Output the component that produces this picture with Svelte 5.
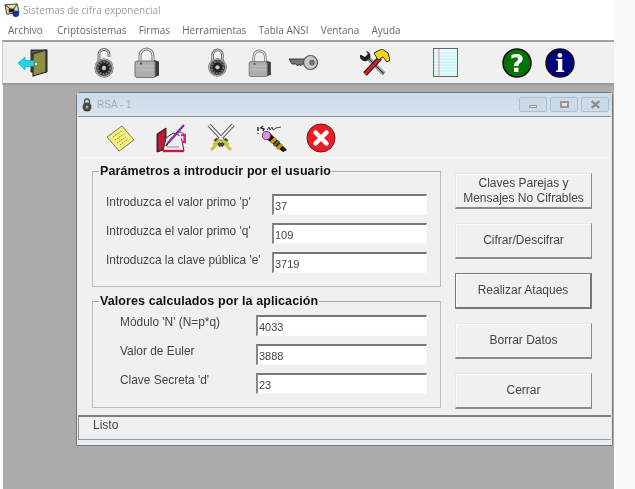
<script>
  const menus = ['Archivo', 'Criptosistemas', 'Firmas', 'Herramientas', 'Tabla ANSI', 'Ventana', 'Ayuda'];
  const inputs = [
    ["Introduzca el valor primo 'p'", '37'],
    ["Introduzca el valor primo 'q'", '109'],
    ["Introduzca la clave pública 'e'", '3719']
  ];
  const computed = [
    ["Módulo 'N' (N=p*q)", '4033'],
    ['Valor de Euler', '3888'],
    ["Clave Secreta 'd'", '23']
  ];
  const buttons = [
    ['Claves Parejas y', 'Mensajes No Cifrables'],
    ['Cifrar/Descifrar'],
    ['Realizar Ataques'],
    ['Borrar Datos'],
    ['Cerrar']
  ];
</script>

{#snippet combo(open)}
  <svg class={open ? 'i-combo-open' : 'i-combo'} viewBox="0 0 20 30">
    <path d={open ? 'M5 14V6a5 4.5 0 0 1 10 0v3' : 'M5 14V7a5 5 0 0 1 10 0v7'} fill="none" stroke="#666" stroke-width="2.800" />
    <path d={open ? 'M5 14V6a5 4.5 0 0 1 10 0v3' : 'M5 14V7a5 5 0 0 1 10 0v7'} fill="none" stroke="#ddd" stroke-width="1" />
    <circle cx="10" cy="20" r="9.500" fill="#4a4a4a" />
    <circle cx="10" cy="20" r="8.600" fill="none" stroke="#a8a8a8" stroke-width="1.400" />
    <circle cx="10" cy="20" r="6" fill="#222" stroke="#777" stroke-width="2" stroke-dasharray="1.500 1.500" />
    <circle cx="10" cy="20" r="2.200" fill="#c4c4c4" />
  </svg>
{/snippet}

{#snippet padlock(cls)}
  <svg class={cls} viewBox="0 0 26 31">
    <path d="M6 15V9a6.500 7 0 0 1 13 0v6" fill="none" stroke="#777" stroke-width="3" />
    <path d="M6 15V9a6.500 7 0 0 1 13 0v6" fill="none" stroke="#ececec" stroke-width="1.200" />
    <path d="M20 13l5 1.500v14l-5 2z" fill="#3a3a3a" />
    <rect x="1" y="14" width="20" height="16.500" rx="2" fill="#adadad" stroke="#777" />
    <path d="M2 19h18M2 23h18" stroke="#c2c2c2" />
    <circle cx="7" cy="16.500" r="1" fill="#444" />
  </svg>
{/snippet}

<div class="app">
  <div class="titlebar">
    <svg class="i-mail" viewBox="0 0 18 16">
      <path d="M1 2l13-1 2 9-13 2z" fill="#e8dfa8" stroke="#333" />
      <path d="M1 2l8 6 5-7" fill="none" stroke="#333" />
      <rect x="5" y="6" width="6" height="4" fill="#222" />
      <circle cx="12.500" cy="11.500" r="3.500" fill="#1b2fa8" />
    </svg>
    <span>Sistemas de cifra exponencial</span>
  </div>

  <nav class="menubar">
    {#each menus as m}<span>{m}</span>{/each}
  </nav>

  <div class="toolbar">
    <svg class="i-door" viewBox="0 0 30 28">
      <path d="M13 1h16v22H13z" fill="#555" stroke="#222" />
      <path d="M15 5l13-4v22l-13 4z" fill="#8f8f47" stroke="#2a2a2a" stroke-width="1.200" />
      <circle cx="18" cy="15" r="1" fill="#fff" />
      <path d="M0 14l7-6v3.500h9v6H7V21z" fill="#1fd5e6" stroke="#0b8a9a" stroke-width=".5" />
    </svg>
    {@render combo(true)}
    {@render padlock('i-pad1')}
    {@render combo(false)}
    {@render padlock('i-pad2')}
    <svg class="i-key" viewBox="0 0 30 17">
      <path d="M1 5h16v5h-3l-1.500 2-1.500-2-1.500 2-1.500-2H4z" fill="#777" stroke="#222" stroke-width=".8" />
      <circle cx="22.500" cy="8.500" r="7" fill="#c9c9c9" stroke="#555" stroke-width="1.200" />
      <circle cx="24" cy="8.500" r="2.500" fill="#777" stroke="#444" stroke-width=".6" />
    </svg>
    <svg class="i-tools" viewBox="0 0 30 28">
      <path d="M6 7l18 18" stroke="#999" stroke-width="4.500" />
      <path d="M6 7l18 18" stroke="#222" stroke-width="1" />
      <path d="M0 6a5 5 0 0 0 8 5l2-2a5 5 0 0 0-4-7l2 3-3 3-4-2z" fill="#222" />
      <path d="M20 9L5 25" stroke="#111" stroke-width="5" />
      <path d="M20 9L5 25" stroke="#d81f26" stroke-width="3" />
      <path d="M14 4l8-4 6 4 2 7-3 2-4-5-5 3z" fill="#f2d518" stroke="#333" />
    </svg>
    <svg class="i-note" viewBox="0 0 25 29">
      <rect x=".5" y=".5" width="24" height="28" fill="#e8fbfd" stroke="#666" />
      <path d="M1 5h23M1 8h23M1 11h23M1 14h23M1 17h23M1 20h23M1 23h23M1 26h23" stroke="#a8eff5" stroke-width=".8" />
      <path d="M6 1v27" stroke="#f08a8a" />
    </svg>
    <svg class="i-circle" viewBox="0 0 30 30">
      <circle cx="15" cy="15" r="14" fill="#047504" stroke="#111" stroke-width="1.500" />
      <text x="15" y="24" text-anchor="middle" class="q">?</text>
    </svg>
    <svg class="i-circle2" viewBox="0 0 30 30">
      <circle cx="15" cy="15" r="14" fill="#00007f" stroke="#111" stroke-width="1.500" />
      <text x="15" y="24" text-anchor="middle" class="inf">i</text>
    </svg>
  </div>

  <main class="mdi">
    <section class="window">
      <header class="wtitle">
        <svg class="i-wicon" viewBox="0 0 10 14">
          <path d="M2.500 6V3.500a2.500 2.500 0 0 1 5 0V6" fill="none" stroke="#555" stroke-width="1.300" />
          <circle cx="5" cy="9" r="4.500" fill="#444" />
          <circle cx="5" cy="9" r="1.500" fill="#aaa" />
        </svg>
        <span class="wname">RSA - 1</span>
        <div class="wbtns">
          <span class="wb"><i class="min"></i></span>
          <span class="wb"><i class="max"></i></span>
          <span class="wb">
            <svg viewBox="0 0 10 8"><path d="M1.500 1l7 6M8.500 1l-7 6" stroke="#8a8a8a" stroke-width="2" /></svg>
          </span>
        </div>
      </header>

      <div class="wtools">
        <svg class="i-paper" viewBox="0 0 29 27">
          <path d="M1 12L16 1l12 14-15 11z" fill="#f6ee7e" stroke="#777" />
          <path d="M7 12l9-6M9 15l9-6M11 18l9-6M14 20l8-6" stroke="#8a8a4a" stroke-dasharray="1.500 1" />
        </svg>
        <svg class="i-book" viewBox="0 0 30 29">
          <path d="M1 10l9-6v21l-9 3z" fill="#a5162a" stroke="#222" />
          <path d="M4 10v15M7 8v15" stroke="#e35" stroke-width=".8" />
          <path d="M7 27l3-13 7-5 8 3 3 15z" fill="#efefef" stroke="#333" />
          <path d="M22 9l3-1 3 2v8" fill="#fff" stroke="#333" stroke-width=".8" />
          <path d="M25 11h4v7h-3" fill="none" stroke="#d7258a" stroke-width="2.400" />
          <path d="M7 27h21" stroke="#c8184a" stroke-width="2.400" />
          <path d="M12 19L28 1" stroke="#8a2aa8" stroke-width="2.400" />
          <path d="M12 19l-2 3" stroke="#222" stroke-width="1.500" />
          <path d="M11 23h12" stroke="#888" />
        </svg>
        <svg class="i-swords" viewBox="0 0 28 28">
          <path d="M2 1l15 16M26 1L11 17" stroke="#555" stroke-width="4" />
          <path d="M2 1l15 16M26 1L11 17" stroke="#e8e8e8" stroke-width="2" />
          <path d="M8 15l6 7M20 15l-6 7" stroke="#444" stroke-width="3.500" />
          <path d="M6 21l7-5M22 21l-7-5M4 26l6-6M24 26l-6-6" stroke="#c8c832" stroke-width="3" />
        </svg>
        <svg class="i-pencil" viewBox="0 0 31 28">
          <path d="M2 3v4M2 9v1M7 2l-2 2 3 1-1 2" stroke="#222" stroke-width="1.400" fill="none" />
          <path d="M11 6l2-3 1 3 2-3 1 3 3-2 5-1" stroke="#444" fill="none" />
          <path d="M8 13l5-5 18 18-4 2z" fill="#111" />
          <circle cx="10.500" cy="11.500" r="4.200" fill="#e889e0" stroke="#333" stroke-width=".8" />
          <path d="M15 19l5-5" stroke="#d88a1e" stroke-width="3.500" />
          <path d="M18 22l5-5" stroke="#2f7a2a" stroke-width="3" />
          <path d="M21 25l5-5" stroke="#d88a1e" stroke-width="3.500" />
          <path d="M25 27l3-3 2 3z" fill="#222" />
        </svg>
        <svg class="i-x" viewBox="0 0 30 30">
          <circle cx="15" cy="15" r="14" fill="#ec1c24" stroke="#7a1010" />
          <path d="M9.500 9.500l11 11M20.500 9.500l-11 11" stroke="#fff" stroke-width="4.500" stroke-linecap="round" />
        </svg>
      </div>

      <div class="wbody">
        <div class="groups">
          <fieldset class="g1">
            <legend>Parámetros a introducir por el usuario</legend>
            {#each inputs as [l, v]}
              <label class="row"><span>{l}</span><input value={v} /></label>
            {/each}
          </fieldset>
          <fieldset class="g2">
            <legend>Valores calculados por la aplicación</legend>
            {#each computed as [l, v]}
              <label class="row"><span>{l}</span><input value={v} /></label>
            {/each}
          </fieldset>
        </div>
        <div class="actions">
          {#each buttons as lines, i}
            <button class:focus={i === 2}>{#each lines as t}<span>{t}</span>{/each}</button>
          {/each}
        </div>
      </div>

      <footer class="status">Listo</footer>
    </section>
  </main>
</div>

<style>
  :global(body) { margin: 0; background: #fafafa; overflow: hidden; }
  .app {
    width: 614px; height: 489px; background: #fff; display: flex; flex-direction: column;
    font-family: "Liberation Sans", Arial, sans-serif; overflow: hidden; filter: blur(.45px);
  }
  .titlebar { height: 20px; display: flex; align-items: center; gap: 2px; padding-left: 4px; color: #9a9a9a; font: 10px "Open Sans", sans-serif; }
  .i-mail { width: 17px; height: 15px; }
  .menubar { height: 20px; display: flex; align-items: center; gap: 12.200px; padding-left: 8px; color: #666; font: 10px "Open Sans", sans-serif; }
  .menubar span:first-child { margin-right: 2px; }
  .toolbar {
    height: 41px; margin-left: 2px; background: #f0f0f0; border-top: 2px solid #a0a0a0; border-left: 1px solid #c8c8c8;
    border-bottom: 2px solid #9a9a9a; display: flex; align-items: center; padding-left: 15px; box-sizing: content-box;
  }
  .toolbar svg, .wtools svg { flex: none; }
  .i-door { width: 30px; height: 28px; }
  :global(.i-combo-open) { width: 20px; height: 30px; margin-left: 46px; }
  :global(.i-pad1) { width: 26px; height: 31px; margin-left: 20px; }
  :global(.i-combo) { width: 21px; height: 29px; margin-left: 47px; }
  :global(.i-pad2) { width: 24px; height: 28px; margin-left: 20px; }
  .i-key { width: 30px; height: 17px; margin-left: 16px; }
  .i-tools { width: 30px; height: 28px; margin-left: 42px; }
  .i-note { width: 25px; height: 29px; margin-left: 43px; }
  .i-circle { width: 30px; height: 30px; margin-left: 44px; }
  .i-circle2 { width: 30px; height: 30px; margin-left: 13px; }
  .q, .inf { fill: #fff; font: bold 25px "DejaVu Sans", sans-serif; }
  .inf { font-family: "DejaVu Serif", serif; }

  .mdi { flex: 1; margin-left: 3px; background: #ababab; padding: 7px 1px 0 73px; min-height: 0; }
  .window {
    height: 354px; box-sizing: border-box; background: #e6edf4; border: 1px solid #777; border-radius: 4px 4px 0 0;
    display: flex; flex-direction: column;
  }
  .wtitle {
    height: 23px; flex: none; display: flex; align-items: center; padding: 0 3px 0 5px;
    background: linear-gradient(#c9d9e8, #d9e5f0); color: #a8adb3; font-size: 10px;
  }
  .i-wicon { width: 10px; height: 14px; margin-right: 5px; }
  .wname { flex: 1; }
  .wbtns { display: flex; gap: 3px; }
  .wb {
    width: 28px; height: 15px; box-sizing: border-box; border: 1px solid #aebfd0; border-radius: 2px;
    background: #cddbe9; display: flex; align-items: center; justify-content: center;
  }
  .wb svg { width: 11px; height: 9px; }
  .min { width: 8px; height: 3px; background: #e8e8e8; border: 1px solid #999; margin-top: 3px; box-sizing: border-box; }
  .max { width: 9px; height: 7px; box-sizing: border-box; background: #e8e8e8; border: 2px solid #999; }
  .wtools {
    height: 38px; padding-top: 2px; flex: none; margin: 0 1px; display: flex; align-items: center; padding-left: 28px;
    border-top: 1px solid #8f8f8f; background: #f0f0f0; border-bottom: 1px solid #f8f8f8;
  }
  .i-paper { width: 29px; height: 27px; }
  .i-book { width: 30px; height: 29px; margin-left: 21px; }
  .i-swords { width: 28px; height: 28px; margin-left: 21px; }
  .i-pencil { width: 31px; height: 28px; margin-left: 21px; }
  .i-x { width: 30px; height: 30px; margin-left: 19px; }

  .wbody { height: 257px; flex: none; display: flex; margin: 0 1px; padding-left: 14px; box-sizing: border-box; background: #f0f0f0; }
  .groups { width: 349px; padding-top: 6px; display: flex; flex-direction: column; gap: 7px; }
  fieldset {
    margin: 0; box-sizing: border-box; min-width: 0; border: 1px solid #bdbdbd; border-top-color: #a9a9a9;
    padding: 0; 
  }
  .g1 { height: 123px; padding: 16px 13px 0 13px; }
  .g2 { height: 114px; padding: 7px 13px 0 27px; }
  legend { padding: 0 1px; font: bold 12.500px "Liberation Sans", sans-serif; letter-spacing: .1px; color: #111; line-height: 14px; }
  .g1 legend { margin-left: -7px; }
  .g2 legend { margin-left: -21px; }
  .row { display: flex; height: 21px; margin-bottom: 8px; justify-content: space-between; color: #444; font-size: 11.900px; }
  .row span { line-height: 14px; }
  .g1 .row span { margin-top: 1px; }
  input {
    width: 155px; height: 21px; box-sizing: border-box; border: 1px solid #f8f8f8; border-top: 2px solid #777; border-left: 2px solid #888;
    background: #fff; padding: 2px 0 0 1px; margin: 0; font: 11px "Liberation Sans", sans-serif; color: #444; outline: none;
  }
  .g2 input { width: 171px; }

  .actions { margin-left: 14px; padding-top: 15px; display: flex; flex-direction: column; gap: 14px; }
  button {
    width: 137px; height: 36px; box-sizing: border-box; background: #f0f0f0; padding: 0; margin: 0;
    border: 1px solid #e8e8e8; border-right-color: #8a8a8a; border-bottom: 2px solid #8a8a8a; box-shadow: inset 1px 1px #fafafa;
    font: 12px "Liberation Sans", sans-serif; color: #444; display: flex; flex-direction: column; align-items: center; justify-content: center;
  }
  button span { line-height: 15px; }
  button.focus { border: 1px solid #777; border-right-width: 2px; border-bottom-width: 2px; }

  .status {
    flex: 1; margin: 0 1px 5px; border-top: 2px solid #808080; border-left: 1px solid #909090; border-bottom: 1px solid #999;
    padding: 1px 0 0 14px; font-size: 12px; color: #444; background: #f0f0f0;
  }
</style>
